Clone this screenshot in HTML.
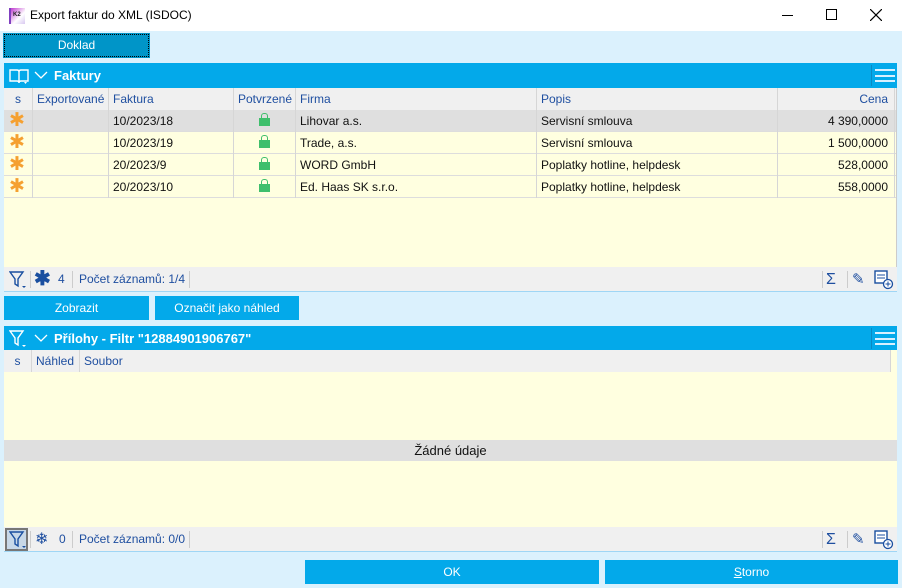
<!DOCTYPE html>
<html><head><meta charset="utf-8"><style>
*{box-sizing:border-box;margin:0;padding:0}
body{width:902px;height:588px;background:#dbf1fd;font-family:"Liberation Sans",sans-serif;font-size:12px;position:relative;overflow:hidden}
.abs{position:absolute}
.title{left:0;top:0;width:902px;height:31px;background:#fff}
.btn{background:#03a9ea;color:#fff;text-align:center;line-height:24px;font-size:12px}
.hdr{background:#03a9ea;color:#fff;font-weight:bold;font-size:13px;height:25px;line-height:25px}
.colh{background:#f0f0f0;color:#1f4fa0;height:22px;line-height:22px}
.colh span,.row span{position:absolute;top:0;height:22px;border-right:1px solid #d6d6d6;padding-left:4px}
.row{height:22px;line-height:22px;background:#ffffe0;border-bottom:1px solid #ddd;color:#111}
.foot{background:#f0f0f0;height:25px;line-height:25px;color:#1f4fa0;border-bottom:1px solid #9fd6f5}
.ast{color:#f5a030;font-size:19px;line-height:22px;padding-left:5px!important}
.lock{display:inline-block;width:11px;height:8px;background:#3fbf6c;position:relative;top:1px;margin-left:21px}
.lock:before{content:"";position:absolute;left:2px;top:-5px;width:5px;height:5px;border:1px solid #3fbf6c;border-bottom:none;border-radius:3px 3px 0 0}
.burger{position:absolute;right:2px;top:6px;width:20px;height:13px;border-top:2px solid #d8f0ff;border-bottom:2px solid #d8f0ff}
.burger:after{content:"";position:absolute;left:0;right:0;top:3.5px;border-top:2px solid #d8f0ff}
.sep{position:absolute;top:4px;height:17px;border-left:1px solid #ccc}
</style></head><body>
<div class="abs title">
 <div class="abs" style="left:9px;top:8px;width:16px;height:16px;background:linear-gradient(135deg,#c03bd0,#ffffff 60%,#d8c8f0);border-left:2px solid #8040c0"><div style="font-size:6px;font-weight:bold;color:#222;margin:4px 0 0 2px">K2</div></div>
 <div class="abs" style="left:30px;top:8px;font-size:12px;color:#000">Export faktur do XML (ISDOC)</div>
 <div class="abs" style="left:782px;top:15px;width:11px;border-top:1px solid #000"></div>
 <div class="abs" style="left:826px;top:9px;width:11px;height:11px;border:1px solid #000"></div>
 <svg class="abs" style="left:870px;top:9px" width="12" height="12"><path d="M0 0L12 12M12 0L0 12" stroke="#000" stroke-width="1.2"/></svg>
</div>
<div class="abs btn" style="left:4px;top:34px;width:145px;height:23px;line-height:21px;background:#0095c8;border:1px dotted #000;outline:1px solid #0095c8">Doklad</div>

<div class="abs hdr" style="left:4px;top:63px;width:893px">
 <svg class="abs" style="left:5px;top:5px" width="20" height="16"><path d="M1 2h7q2 0 2 2v11q0-2-2-2H1zM19 2h-7q-2 0-2 2v11q0-2 2-2h7z" fill="none" stroke="#fff" stroke-width="1.4"/><path d="M15 14l1.5 2 1.5-2z" fill="#fff"/></svg>
 <svg class="abs" style="left:30px;top:8px" width="14" height="9"><path d="M1 1l6 6 6-6" fill="none" stroke="#fff" stroke-width="1.3"/></svg>
 <span style="position:absolute;left:50px">Faktury</span>
 <div class="sep" style="right:25px;border-color:#0a8ac4;top:2px;height:21px"></div>
 <div class="burger"></div>
</div>
<div class="abs" style="left:4px;top:88px;width:893px;height:180px;background:#ffffe0;border-right:1px solid #ccc">
 <div class="colh" style="position:relative">
  <span style="left:0;width:29px;text-align:center;padding:0">s</span><span style="left:29px;width:76px">Exportované</span><span style="left:105px;width:125px">Faktura</span><span style="left:230px;width:62px">Potvrzené</span><span style="left:292px;width:241px">Firma</span><span style="left:533px;width:241px">Popis</span><span style="left:774px;width:117px;text-align:right;padding-right:6px">Cena</span>
 </div>
 <div class="row" style="position:relative;background:#dfdfdf"><span class="ast" style="left:0;width:29px">✱</span><span style="left:29px;width:76px"></span><span style="left:105px;width:125px">10/2023/18</span><span style="left:230px;width:62px"><i class="lock"></i></span><span style="left:292px;width:241px">Lihovar a.s.</span><span style="left:533px;width:241px">Servisní smlouva</span><span style="left:774px;width:117px;text-align:right;padding-right:6px">4 390,0000</span></div>
 <div class="row" style="position:relative"><span class="ast" style="left:0;width:29px">✱</span><span style="left:29px;width:76px"></span><span style="left:105px;width:125px">10/2023/19</span><span style="left:230px;width:62px"><i class="lock"></i></span><span style="left:292px;width:241px">Trade, a.s.</span><span style="left:533px;width:241px">Servisní smlouva</span><span style="left:774px;width:117px;text-align:right;padding-right:6px">1 500,0000</span></div>
 <div class="row" style="position:relative"><span class="ast" style="left:0;width:29px">✱</span><span style="left:29px;width:76px"></span><span style="left:105px;width:125px">20/2023/9</span><span style="left:230px;width:62px"><i class="lock"></i></span><span style="left:292px;width:241px">WORD GmbH</span><span style="left:533px;width:241px">Poplatky hotline, helpdesk</span><span style="left:774px;width:117px;text-align:right;padding-right:6px">528,0000</span></div>
 <div class="row" style="position:relative"><span class="ast" style="left:0;width:29px">✱</span><span style="left:29px;width:76px"></span><span style="left:105px;width:125px">20/2023/10</span><span style="left:230px;width:62px"><i class="lock"></i></span><span style="left:292px;width:241px">Ed. Haas SK s.r.o.</span><span style="left:533px;width:241px">Poplatky hotline, helpdesk</span><span style="left:774px;width:117px;text-align:right;padding-right:6px">558,0000</span></div>
</div>
<div class="abs foot" style="left:4px;top:267px;width:893px">
 <svg class="abs" style="left:5px;top:4px" width="18" height="18"><path d="M1 1h13l-5 7v7l-3-2V8z" fill="none" stroke="#1a4fa0" stroke-width="1.4"/><path d="M13 15h4l-2 2z" fill="#1a4fa0"/></svg>
 <div class="sep" style="left:26px"></div>
 <span class="abs" style="left:30px;top:0;font-size:20px;font-weight:bold;color:#1a4fa0">✱</span>
 <span class="abs" style="left:54px">4</span>
 <div class="sep" style="left:68px"></div>
 <span class="abs" style="left:75px">Počet záznamů: 1/4</span>
 <div class="sep" style="left:185px"></div>
 <div class="sep" style="left:818px"></div>
 <span class="abs" style="left:822px;font-size:16px">Σ</span>
 <div class="sep" style="left:843px"></div>
 <span class="abs" style="left:848px;font-size:15px">✎</span>
 <svg class="abs" style="left:870px;top:3px" width="20" height="20"><rect x="1" y="1" width="12" height="12" fill="#fff" stroke="#1a4fa0" stroke-width="1.4"/><path d="M3 5h8M3 8h8" stroke="#1a4fa0"/><circle cx="14" cy="14" r="4.5" fill="#fff" stroke="#1a4fa0" stroke-width="1.3"/><path d="M11.5 14h5M14 11.5v5" stroke="#1a4fa0"/></svg>
</div>
<div class="abs btn" style="left:4px;top:296px;width:145px">Zobrazit</div>
<div class="abs btn" style="left:155px;top:296px;width:144px">Označit jako náhled</div>

<div class="abs hdr" style="left:4px;top:326px;width:893px">
 <svg class="abs" style="left:5px;top:4px" width="18" height="18"><path d="M1 1h13l-5 7v7l-3-2V8z" fill="none" stroke="#fff" stroke-width="1.4"/><path d="M13 15h4l-2 2z" fill="#fff"/></svg>
 <svg class="abs" style="left:30px;top:8px" width="14" height="9"><path d="M1 1l6 6 6-6" fill="none" stroke="#fff" stroke-width="1.3"/></svg>
 <span style="position:absolute;left:50px">Přílohy - Filtr "12884901906767"</span>
 <div class="sep" style="right:25px;border-color:#0a8ac4;top:2px;height:21px"></div>
 <div class="burger"></div>
</div>
<div class="abs" style="left:4px;top:350px;width:893px;height:178px;background:#ffffe0">
 <div class="colh" style="position:relative;width:887px">
  <span style="left:0;width:28px;text-align:center;padding:0">s</span><span style="left:28px;width:48px">Náhled</span><span style="left:76px;width:811px">Soubor</span>
 </div>
 <div style="position:absolute;left:0;top:90px;width:893px;height:21px;background:#dfdfdf;text-align:center;line-height:21px;font-size:13px;color:#111">Žádné údaje</div>
</div>
<div class="abs foot" style="left:4px;top:527px;width:893px">
 <span class="abs" style="left:1px;top:1px;width:23px;height:23px;border:2px solid #777;background:#c8d8e8"></span>
 <svg class="abs" style="left:5px;top:4px" width="18" height="18"><path d="M1 1h13l-5 7v7l-3-2V8z" fill="none" stroke="#1a4fa0" stroke-width="1.4"/><path d="M13 15h4l-2 2z" fill="#1a4fa0"/></svg>
 <div class="sep" style="left:26px"></div>
 <span class="abs" style="left:31px;font-size:16px">❄</span>
 <span class="abs" style="left:55px">0</span>
 <div class="sep" style="left:68px"></div>
 <span class="abs" style="left:75px">Počet záznamů: 0/0</span>
 <div class="sep" style="left:185px"></div>
 <div class="sep" style="left:818px"></div>
 <span class="abs" style="left:822px;font-size:16px">Σ</span>
 <div class="sep" style="left:843px"></div>
 <span class="abs" style="left:848px;font-size:15px">✎</span>
 <svg class="abs" style="left:870px;top:3px" width="20" height="20"><rect x="1" y="1" width="12" height="12" fill="#fff" stroke="#1a4fa0" stroke-width="1.4"/><path d="M3 5h8M3 8h8" stroke="#1a4fa0"/><circle cx="14" cy="14" r="4.5" fill="#fff" stroke="#1a4fa0" stroke-width="1.3"/><path d="M11.5 14h5M14 11.5v5" stroke="#1a4fa0"/></svg>
</div>
<div class="abs btn" style="left:305px;top:560px;width:294px">OK</div>
<div class="abs btn" style="left:605px;top:560px;width:293px"><u>S</u>torno</div>
</body></html>
